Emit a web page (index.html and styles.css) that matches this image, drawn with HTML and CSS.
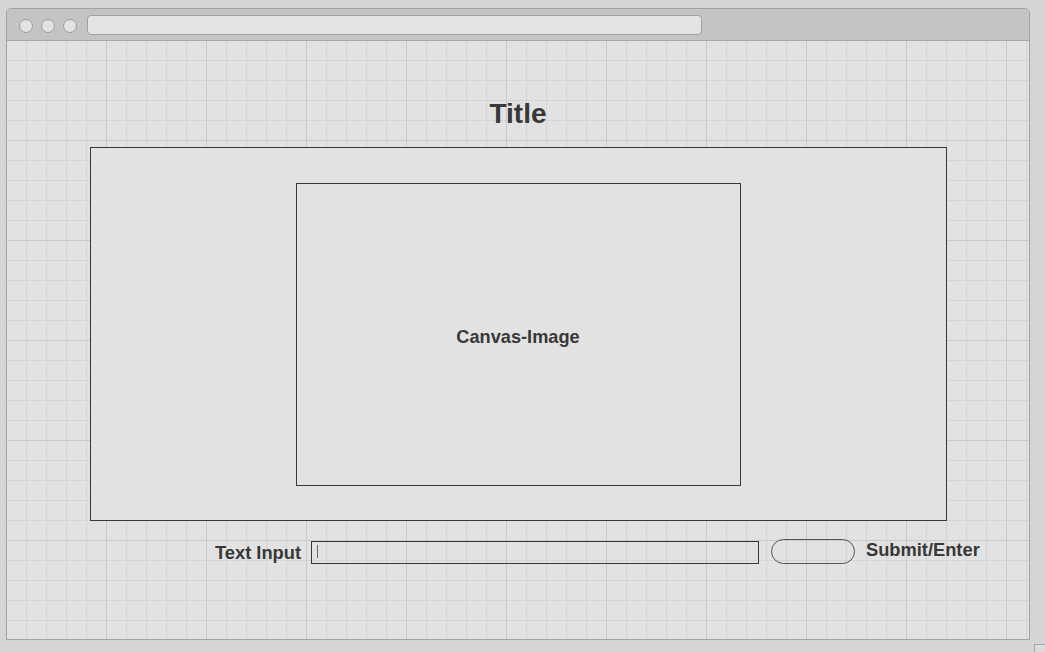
FILE: index.html
```html
<!DOCTYPE html>
<html>
<head>
<meta charset="utf-8">
<title>Wireframe</title>
<link rel="stylesheet" href="styles.css">
</head>
<body>
<div class="window">
  <div class="titlebar">
    <span class="dot"></span>
    <span class="dot"></span>
    <span class="dot"></span>
    <div class="address"></div>
  </div>
  <div class="content">
    <h1 class="title">Title</h1>
    <div class="frame">
      <div class="canvas">Canvas-Image</div>
    </div>
    <div class="row">
      <span class="label">Text Input</span>
      <div class="input"><span class="caret"></span></div>
      <div class="button"></div>
      <span class="submit">Submit/Enter</span>
    </div>
  </div>
</div>
<div class="resize"></div>
</body>
</html>
```
FILE: styles.css
```css
html, body {
  margin: 0;
  padding: 0;
}
body {
  background: #d5d5d5;
  width: 1045px;
  height: 652px;
  overflow: hidden;
  position: relative;
  font-family: "Liberation Sans", Arial, sans-serif;
  color: #383838;
}
.window {
  margin: 8px 0 0 6px;
  width: 1024px;
  height: 632px;
  box-sizing: border-box;
  border: 1px solid #a2a2a2;
  border-radius: 5px 5px 0 0;
  display: flex;
  flex-direction: column;
  overflow: hidden;
}
.titlebar {
  height: 32px;
  box-sizing: border-box;
  background: #c4c4c4;
  border-bottom: 1px solid #a8a8a8;
  display: flex;
  align-items: flex-start;
  padding-left: 12px;
  flex: none;
}
.dot {
  width: 14px;
  height: 14px;
  box-sizing: border-box;
  border-radius: 50%;
  background: #e2e2e2;
  border: 1px solid #9c9c9c;
  margin-top: 10px;
  margin-right: 8px;
}
.dot:nth-child(3) {
  margin-right: 10px;
}
.address {
  width: 615px;
  height: 20px;
  box-sizing: border-box;
  margin-top: 6px;
  background: #e4e4e4;
  border: 1px solid #a0a0a0;
  border-radius: 4px;
}
.content {
  flex: 1;
  background-color: #e2e2e2;
  background-image:
    linear-gradient(to right, transparent 99px, #cacaca 99px),
    linear-gradient(to bottom, transparent 99px, #cacaca 99px),
    linear-gradient(to right, transparent 19px, #d4d4d4 19px),
    linear-gradient(to bottom, transparent 19px, #d4d4d4 19px);
  background-size: 100px 100px, 100px 100px, 20px 20px, 20px 20px;
}
.title {
  margin: 0;
  padding-top: 57px;
  font-size: 28px;
  line-height: 32px;
  font-weight: bold;
  text-align: center;
  color: #383838;
}
.frame {
  width: 857px;
  height: 374px;
  box-sizing: border-box;
  margin: 17px auto 0;
  border: 1px solid #383838;
  background: #e2e2e2;
  padding-top: 35px;
}
.canvas {
  width: 445px;
  height: 303px;
  box-sizing: border-box;
  margin: 0 auto;
  border: 1px solid #383838;
  background: #e2e2e2;
  display: flex;
  align-items: center;
  justify-content: center;
  padding-top: 6px;
  font-size: 18.2px;
  font-weight: bold;
}
.row {
  display: flex;
  align-items: flex-start;
  padding-left: 208px;
  margin-top: 18px;
}
.label {
  font-size: 18.3px;
  line-height: 22px;
  font-weight: bold;
  margin-top: 3px;
  margin-right: 10px;
}
.input {
  width: 448px;
  height: 23px;
  box-sizing: border-box;
  margin-top: 2px;
  border: 1px solid #383838;
  padding: 3px 0 0 5px;
  display: flex;
  align-items: flex-start;
}
.caret {
  width: 1px;
  height: 13px;
  background: #6a6a6a;
}
.button {
  width: 84px;
  height: 25px;
  box-sizing: border-box;
  margin-left: 12px;
  border: 1px solid #555;
  border-radius: 12.5px;
}
.submit {
  font-size: 18.3px;
  line-height: 22px;
  font-weight: bold;
  margin-left: 11px;
}
.resize {
  position: absolute;
  left: 1034px;
  top: 644px;
  width: 14px;
  height: 14px;
  box-sizing: border-box;
  border: 1px solid #a8a8a8;
  background: #dcdcdc;
}
```
